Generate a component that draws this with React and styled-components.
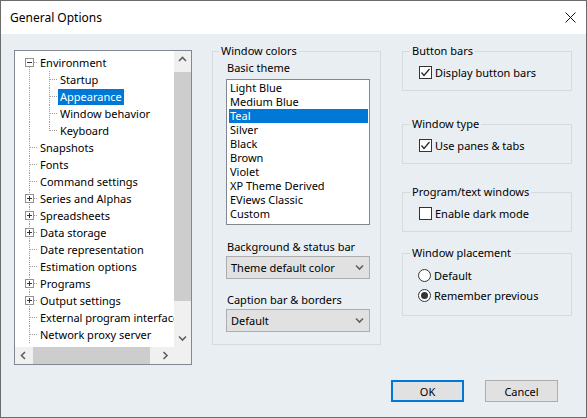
import React from 'react';
import styled, { createGlobalStyle } from 'styled-components';

const GlobalStyle = createGlobalStyle`
  html, body { margin: 0; padding: 0; background: #fff; }
  #root { width: 587px; height: 418px; }
  * { box-sizing: border-box; }
`;

const FONT = `"Noto Sans", "Open Sans", sans-serif`;
const DOTS_V = 'repeating-linear-gradient(to bottom, #a0a0a0 0 1px, transparent 1px 2px)';
const DOTS_H = 'repeating-linear-gradient(to right, #a0a0a0 0 1px, transparent 1px 2px)';

const tree = [
    { label: 'Environment', level: 0, exp: 'minus', first: true },
    { label: 'Startup', level: 1 },
    { label: 'Appearance', level: 1, selected: true },
    { label: 'Window behavior', level: 1 },
    { label: 'Keyboard', level: 1, last: true },
    { label: 'Snapshots', level: 0 },
    { label: 'Fonts', level: 0 },
    { label: 'Command settings', level: 0 },
    { label: 'Series and Alphas', level: 0, exp: 'plus' },
    { label: 'Spreadsheets', level: 0, exp: 'plus' },
    { label: 'Data storage', level: 0, exp: 'plus' },
    { label: 'Date representation', level: 0 },
    { label: 'Estimation options', level: 0 },
    { label: 'Programs', level: 0, exp: 'plus' },
    { label: 'Output settings', level: 0, exp: 'plus' },
    { label: 'External program interface', level: 0 },
    { label: 'Network proxy server', level: 0 },
];

const themes = ['Light Blue', 'Medium Blue', 'Teal', 'Silver', 'Black', 'Brown', 'Violet', 'XP Theme Derived', 'EViews Classic', 'Custom'];

const Chevron = ({ dir }) => {
    const pts = {
        up: '1,5 4.5,1.5 8,5',
        down: '1,1.5 4.5,5 8,1.5',
        left: '5,1 1.5,4.5 5,8',
        right: '1.5,1 5,4.5 1.5,8',
    }[dir];
    const w = dir === 'up' || dir === 'down' ? 9 : 7;
    const h = dir === 'up' || dir === 'down' ? 7 : 9;
    return (
        <svg width={w} height={h} viewBox={`0 0 ${w} ${h}`}>
            <polyline points={pts} fill='none' stroke='#606060' strokeWidth='1.6' />
        </svg>
    );
};

const ExpanderBox = ({ kind }) => (
    <Expander width='9' height='9' viewBox='0 0 9 9'>
        <rect x='0.5' y='0.5' width='8' height='8' fill='#fff' stroke='#919191' />
        <line x1='2' y1='4.5' x2='7' y2='4.5' stroke='#333' />
        {kind === 'plus' && <line x1='4.5' y1='2' x2='4.5' y2='7' stroke='#333' />}
    </Expander>
);

const TreeNode = ({ node }) => {
    if (node.level === 1) {
        return (
            <TreeRow>
                <Cell $v='full' />
                <Cell $v={node.last ? 'top' : 'full'} $h />
                <NodeLabel $selected={node.selected}>{node.label}</NodeLabel>
            </TreeRow>
        );
    }
    return (
        <TreeRow>
            <Cell $v={node.first ? 'bottom' : 'full'} $h $hStart={node.exp ? 15 : 11}>
                {node.exp && <ExpanderBox kind={node.exp} />}
            </Cell>
            <NodeLabel>{node.label}</NodeLabel>
        </TreeRow>
    );
};

const Check = ({ checked, children }) => (
    <OptionRow>
        <CheckBox>
            {checked && (
                <svg width='11' height='11' viewBox='0 0 11 11'>
                    <polyline points='1.5,5.5 4,8.5 9.5,2' fill='none' stroke='#222' strokeWidth='1.2' />
                </svg>
            )}
        </CheckBox>
        {children}
    </OptionRow>
);

const Radio = ({ checked, children }) => (
    <OptionRow $h={20}>
        <RadioCircle>{checked && <RadioDot />}</RadioCircle>
        {children}
    </OptionRow>
);

const App = () => {
    return (
        <>
            <GlobalStyle />
            <Window>
                <TitleBar>
                    <Title>General Options</Title>
                    <svg width='11' height='11' viewBox='0 0 11 11'>
                        <line x1='0.5' y1='0.5' x2='10.5' y2='10.5' stroke='#111' />
                        <line x1='10.5' y1='0.5' x2='0.5' y2='10.5' stroke='#111' />
                    </svg>
                </TitleBar>
                <Body>
                    <Main>
                        <TreeBox>
                            <TreeView>
                                {tree.map(n => (
                                    <TreeNode key={n.label} node={n} />
                                ))}
                            </TreeView>
                            <VScroll>
                                <ArrowBtn><Chevron dir='up' /></ArrowBtn>
                                <VTrack>
                                    <VThumb />
                                </VTrack>
                                <ArrowBtn><Chevron dir='down' /></ArrowBtn>
                            </VScroll>
                            <HScroll>
                                <ArrowBtn><Chevron dir='left' /></ArrowBtn>
                                <HTrack>
                                    <HThumb />
                                </HTrack>
                                <ArrowBtn><Chevron dir='right' /></ArrowBtn>
                            </HScroll>
                            <Corner />
                        </TreeBox>

                        <Group $width={169} $ml={20} $pad='1px 10px 12px 13px'>
                            <Legend $ml={-7}>Window colors</Legend>
                            <FieldLabel>Basic theme</FieldLabel>
                            <ListBox>
                                {themes.map(t => (
                                    <ListItem key={t} $selected={t === 'Teal'}>
                                        {t}
                                    </ListItem>
                                ))}
                            </ListBox>
                            <FieldLabel $mt={14}>Background &amp; status bar</FieldLabel>
                            <Combo>
                                <span>Theme default color</span>
                                <Chevron dir='down' />
                            </Combo>
                            <FieldLabel $mt={13}>Caption bar &amp; borders</FieldLabel>
                            <Combo>
                                <span>Default</span>
                                <Chevron dir='down' />
                            </Combo>
                        </Group>

                        <RightColumn>
                            <Group $pad='4px 8px 9px 16px'>
                                <Legend $ml={-9}>Button bars</Legend>
                                <Check checked>Display button bars</Check>
                            </Group>
                            <Group $mt={25} $pad='4px 8px 9px 16px'>
                                <Legend $ml={-9}>Window type</Legend>
                                <Check checked>Use panes &amp; tabs</Check>
                            </Group>
                            <Group $mt={20} $pad='4px 8px 9px 16px'>
                                <Legend $ml={-9}>Program/text windows</Legend>
                                <Check>Enable dark mode</Check>
                            </Group>
                            <Group $mt={13} $pad='4px 8px 10px 15px'>
                                <Legend $ml={-8}>Window placement</Legend>
                                <Radio>Default</Radio>
                                <Radio checked>Remember previous</Radio>
                            </Group>
                        </RightColumn>
                    </Main>
                    <Footer>
                        <Button $default>OK</Button>
                        <Button>Cancel</Button>
                    </Footer>
                </Body>
            </Window>
        </>
    );
};

export default App;

const Window = styled.div`
    width: 587px;
    height: 418px;
    border: 1px solid #6b6b6b;
    display: flex;
    flex-direction: column;
    background: #e9eef2;
    font-family: ${FONT};
    font-size: 11px;
    color: #000;
    overflow: hidden;
`;

const TitleBar = styled.div`
    height: 33px;
    flex: none;
    background: #fff;
    display: flex;
    align-items: center;
    justify-content: space-between;
    padding: 0 10px 0 9px;
`;

const Title = styled.div`
    font-size: 12px;
`;

const Body = styled.div`
    flex: 1;
    display: flex;
    flex-direction: column;
    padding: 9px 14px 15px 13px;
`;

const Main = styled.div`
    display: flex;
    align-items: flex-start;
`;

const TreeBox = styled.div`
    width: 178px;
    height: 315px;
    margin-top: 7px;
    flex: none;
    border: 1px solid #828790;
    background: #fff;
    display: grid;
    grid-template-columns: 1fr 17px;
    grid-template-rows: 1fr 17px;
`;

const TreeView = styled.div`
    overflow: hidden;
    padding: 3px 0 0 4px;
    white-space: nowrap;
`;

const TreeRow = styled.div`
    height: 17px;
    display: flex;
    align-items: center;
`;

const Cell = styled.span`
    position: relative;
    flex: none;
    width: 20px;
    height: 17px;
    display: flex;
    align-items: center;

    &::before {
        content: '';
        position: absolute;
        left: 10px;
        width: 1px;
        top: ${p => (p.$v === 'bottom' ? '9px' : '0')};
        bottom: ${p => (p.$v === 'top' ? '8px' : '0')};
        background: ${DOTS_V};
    }

    &::after {
        content: '';
        display: ${p => (p.$h ? 'block' : 'none')};
        position: absolute;
        left: ${p => p.$hStart || 11}px;
        right: 1px;
        top: 8px;
        height: 1px;
        background: ${DOTS_H};
    }
`;

const Expander = styled.svg`
    position: relative;
    z-index: 1;
    margin: 0 0 1px 6px;
`;

const NodeLabel = styled.span`
    margin-left: -1px;
    padding: 0 2px;
    line-height: 16px;
    background: ${p => (p.$selected ? '#0078d7' : 'transparent')};
    color: ${p => (p.$selected ? '#fff' : '#000')};
`;

const VScroll = styled.div`
    background: #f0f0f0;
    display: flex;
    flex-direction: column;
`;

const HScroll = styled.div`
    background: #f0f0f0;
    display: flex;
`;

const ArrowBtn = styled.div`
    width: 17px;
    height: 17px;
    flex: none;
    display: flex;
    align-items: center;
    justify-content: center;
`;

const VTrack = styled.div`
    flex: 1;
    padding-top: 4px;
`;

const VThumb = styled.div`
    height: 229px;
    background: #cdcdcd;
`;

const HTrack = styled.div`
    flex: 1;
    padding-left: 1px;
`;

const HThumb = styled.div`
    width: 117px;
    height: 100%;
    background: #cdcdcd;
`;

const Corner = styled.div`
    background: #f0f0f0;
`;

const Group = styled.fieldset`
    margin: ${p => p.$mt || 0}px 0 0 ${p => p.$ml || 0}px;
    width: ${p => (p.$width ? `${p.$width}px` : '100%')};
    flex: none;
    min-width: 0;
    padding: ${p => p.$pad};
    border: 1px solid #d5dadf;
`;

const Legend = styled.legend`
    margin-left: ${p => p.$ml}px;
    padding: 0 2px;
    line-height: 16px;
`;

const FieldLabel = styled.div`
    margin-top: ${p => p.$mt || 0}px;
    line-height: 16px;
    margin-left: 1px;
`;

const ListBox = styled.div`
    margin-top: 3px;
    height: 146px;
    border: 1px solid #828790;
    background: #fff;
    padding: 1px 1px 1px 2px;
`;

const ListItem = styled.div`
    height: 14px;
    line-height: 14px;
    padding-left: 1px;
    background: ${p => (p.$selected ? '#0078d7' : 'transparent')};
    color: ${p => (p.$selected ? '#fff' : '#000')};
`;

const Combo = styled.div`
    margin-top: 1px;
    height: 23px;
    border: 1px solid #adadad;
    background: #e1e1e1;
    display: flex;
    align-items: center;
    justify-content: space-between;
    padding: 0 5px 0 4px;
`;

const RightColumn = styled.div`
    width: 170px;
    margin-left: 21px;
    flex: none;
    display: flex;
    flex-direction: column;
`;

const OptionRow = styled.div`
    height: ${p => p.$h || 18}px;
    display: flex;
    align-items: center;
    gap: 3px;
`;

const CheckBox = styled.span`
    width: 13px;
    height: 13px;
    flex: none;
    border: 1px solid #333;
    background: #fff;
    display: flex;
    align-items: center;
    justify-content: center;
`;

const RadioCircle = styled.span`
    width: 13px;
    height: 13px;
    flex: none;
    border: 1px solid #333;
    border-radius: 50%;
    background: #fff;
    display: flex;
    align-items: center;
    justify-content: center;
`;

const RadioDot = styled.span`
    width: 7px;
    height: 7px;
    border-radius: 50%;
    background: #333;
`;

const Footer = styled.div`
    margin-top: auto;
    display: flex;
    justify-content: flex-end;
    gap: 21px;
    padding-right: 14px;
`;

const Button = styled.div`
    width: 73px;
    height: 22px;
    display: flex;
    align-items: center;
    justify-content: center;
    background: #e1e1e1;
    border: ${p => (p.$default ? '2px solid #0078d7' : '1px solid #adadad')};
`;
